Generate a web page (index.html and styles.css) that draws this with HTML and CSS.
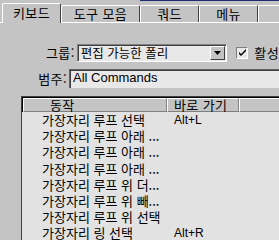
FILE: index.html
```html
<!DOCTYPE html>
<html lang="ko">
<head>
<meta charset="UTF-8" />
<title>사용자 인터페이스 사용자 정의</title>
<link rel="stylesheet" href="styles.css">
</head>
<body>

<div class="window">
  <div class="tabs">
    <div class="tab tab-keys active">키보드</div>
    <div class="tab tab-bars">도구 모음</div>
    <div class="tab">쿼드</div>
    <div class="tab">메뉴</div>
    <div class="tab"></div>
  </div>

  <div class="panel">
    <div class="field-row">
      <span class="field-label">그룹:</span>
      <div class="select">
        <span class="select-value">편집 가능한 폴리</span>
        <span class="select-btn">
          <svg width="7" height="4" viewBox="0 0 7 4"><path d="M0 0h7L3.5 4z" fill="#000"/></svg>
        </span>
      </div>
      <div class="check">
        <span class="check-box">
          <svg width="9" height="9" viewBox="0 0 9 9"><path d="M1 4l2 2 5-5v2L3 8 1 6z" fill="#000"/></svg>
        </span>
        <span>활성</span>
      </div>
    </div>

    <div class="field-row">
      <span class="field-label">범주:</span>
      <div class="input">All Commands</div>
    </div>

    <div class="list">
      <div class="list-head">
        <div class="col col-action">동작</div>
        <div class="col col-key">바로 가기</div>
        <div class="col col-rest"></div>
      </div>
      <div class="list-body">
        <div class="row"><span class="cell-action">가장자리 루프 선택</span><span class="cell-key">Alt+L</span></div>
        <div class="row"><span class="cell-action">가장자리 루프 아래 ...</span><span class="cell-key"></span></div>
        <div class="row"><span class="cell-action">가장자리 루프 아래 ...</span><span class="cell-key"></span></div>
        <div class="row"><span class="cell-action">가장자리 루프 아래 ...</span><span class="cell-key"></span></div>
        <div class="row"><span class="cell-action">가장자리 루프 위 더...</span><span class="cell-key"></span></div>
        <div class="row"><span class="cell-action">가장자리 루프 위 빼...</span><span class="cell-key"></span></div>
        <div class="row"><span class="cell-action">가장자리 루프 위 선택</span><span class="cell-key"></span></div>
        <div class="row"><span class="cell-action">가장자리 링 선택</span><span class="cell-key">Alt+R</span></div>
      </div>
    </div>
  </div>
</div>

</body>
</html>
```

FILE: styles.css
```css
* {
  margin: 0;
  padding: 0;
  box-sizing: border-box;
}

body {
  background-color: #c4c4c4;
  font-family: "Liberation Sans", "Noto Sans CJK KR", sans-serif;
  font-size: 12px;
  color: #000;
  width: 279px;
  height: 240px;
  overflow: hidden;
}

.window {
  width: 279px;
  height: 240px;
  overflow: hidden;
  /* edge of the title bar behind, top right */
  background: linear-gradient(#1c2c6c, #1c2c6c) no-repeat 140px 0 / 139px 1px;
}

.tab,
.field-label,
.select-value,
.check,
.col,
.cell-action {
  font-family: "Noto Sans CJK KR", sans-serif;
  font-size: 13px;
  letter-spacing: 0.4px;
}

/* tab strip */
.tabs {
  display: flex;
  align-items: flex-end;
  height: 23px;
  padding-left: 2px;
  box-shadow: inset 0 -1px #fff;
}

.tab {
  flex: 0 0 59px;
  height: 17px;
  margin-bottom: 1px;
  border-top: 1px solid #fff;
  border-left: 1px solid #fff;
  border-right: 1px solid #404040;
  border-radius: 2px 2px 0 0;
  text-align: center;
  line-height: 15px;
  white-space: nowrap;
}

.tab-keys {
  flex-basis: 59px;
}

.tab-bars {
  flex-basis: 79px;
}

.tab.active {
  height: 20px;
  margin-bottom: 0;
  background: #c4c4c4;
  line-height: 17px;
}

/* form */
.panel {
  padding-top: 20px;
}

.field-row {
  display: flex;
  align-items: center;
  margin-bottom: 7px;
}

.field-label {
  width: 75px;
  margin-right: 2px;
  text-align: right;
}

.select {
  display: flex;
  width: 151px;
  height: 18px;
  background: #e8e8e8;
  border-top: 1px solid #808080;
  border-left: 1px solid #808080;
  border-bottom: 1px solid #fff;
  border-right: 1px solid #fff;
  box-shadow: inset 1px 1px #404040;
}

.select-value {
  flex: 1;
  padding-left: 3px;
  line-height: 15px;
  font-size: 12.5px;
  letter-spacing: 0;
  white-space: nowrap;
}

.select-btn {
  display: flex;
  align-items: center;
  justify-content: center;
  flex-shrink: 0;
  width: 15px;
  height: 14px;
  margin: 1px 1px 0 0;
  background: #c4c4c4;
  border-top: 1px solid #fff;
  border-left: 1px solid #fff;
  border-right: 1px solid #404040;
  border-bottom: 1px solid #404040;
}

.check {
  display: flex;
  align-items: center;
  gap: 6px;
  margin-left: 9px;
  white-space: nowrap;
}

.check-box {
  display: flex;
  align-items: center;
  justify-content: center;
  flex-shrink: 0;
  width: 12px;
  height: 12px;
  background: #e8e8e8;
  border-top: 1px solid #808080;
  border-left: 1px solid #808080;
  border-bottom: 1px solid #fff;
  border-right: 1px solid #fff;
}

.input {
  width: 210px;
  height: 19px;
  flex-shrink: 0;
  padding-left: 3px;
  line-height: 16px;
  font-size: 13px;
  background: #e8e8e8;
  border-top: 1px solid #606060;
  border-left: 1px solid #606060;
  box-shadow: inset 1px 1px #404040;
  white-space: nowrap;
}

/* command list */
.list {
  margin: 8px 0 0 21px;
  width: 270px;
  border-top: 1px solid #404040;
  border-left: 1px solid #404040;
  box-shadow: inset 1px 1px #000;
}

.list-head {
  display: flex;
  height: 14px;
  padding: 1px 0 0 1px;
  box-sizing: content-box;
}

.col {
  height: 14px;
  line-height: 12px;
  border-top: 1px solid #fff;
  border-left: 1px solid #fff;
  border-right: 1px solid #808080;
  border-bottom: 1px solid #808080;
  white-space: nowrap;
}

.col-action {
  width: 144px;
  padding-left: 26px;
}

.col-key {
  width: 72px;
  padding-left: 6px;
}

.col-rest {
  flex: 1;
}

.list-body {
  background: #e2e2e2;
  padding-left: 1px;
  height: 140px;
}

.row {
  display: flex;
  height: 16.2px;
  line-height: 16px;
  white-space: nowrap;
}

.cell-action {
  width: 151px;
  padding-left: 19px;
  letter-spacing: 0;
}

.cell-key {
  font-size: 12px;
}
```
